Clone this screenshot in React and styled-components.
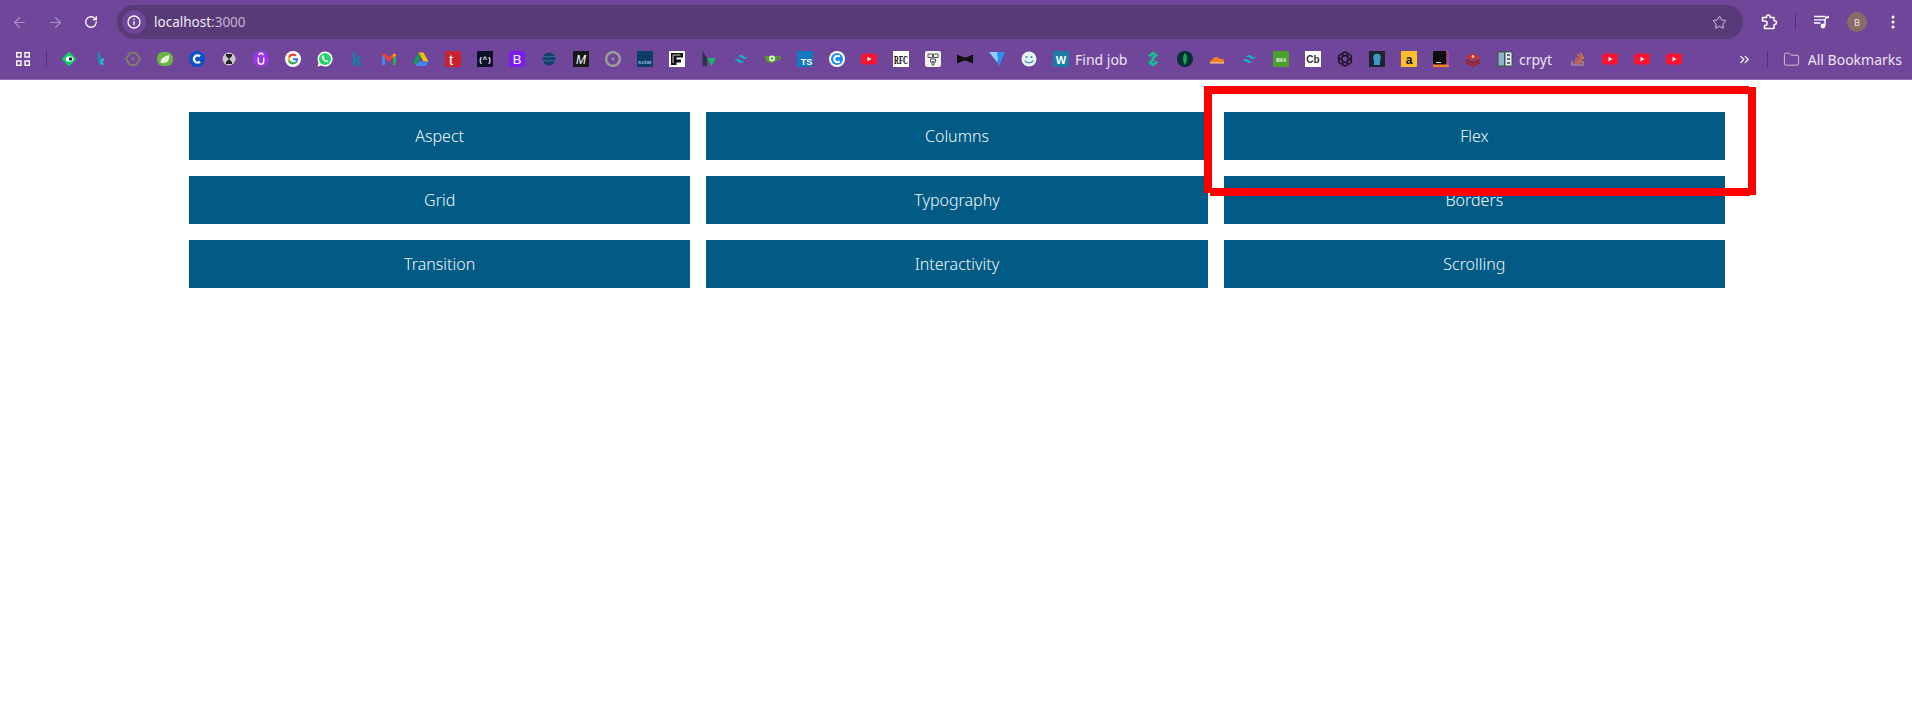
import React from 'react';
import styled, { createGlobalStyle } from 'styled-components';
import { ArrowLeft, ArrowRight, RotateCw, Star, ChevronsRight, Folder } from 'lucide-react';

const GlobalStyle = createGlobalStyle`
  html, body { margin: 0; padding: 0; background: #fff; }
  body { font-family: "Noto Sans", sans-serif; min-height: 714px; overflow: hidden; }
`;

const Page = styled.div`
  position: relative;
  width: 1912px;
  height: 714px;
`;

const Chrome = styled.header`
  height: 79px;
  background: #6f4699;
  border-bottom: 1px solid #8e6db0;
  font-family: "Noto Sans", sans-serif;
`;

const TopRow = styled.div`
  display: flex;
  align-items: flex-start;
  height: 42px;
  padding: 5px 0 0 1px;
  box-sizing: border-box;
`;

const NavButton = styled.div`
  width: 36px;
  height: 34px;
  display: flex;
  align-items: center;
  justify-content: center;
  color: ${p => (p.$dim ? '#a68fc0' : '#ffffff')};
`;

const Omnibox = styled.div`
  flex: 1;
  margin-left: 8px;
  height: 34px;
  border-radius: 17px;
  background: #583a78;
  display: flex;
  align-items: center;
  padding: 0 16px 0 5px;
`;

const InfoChip = styled.div`
  width: 24px;
  height: 24px;
  border-radius: 50%;
  background: #6f4699;
  display: flex;
  align-items: center;
  justify-content: center;
`;

const Url = styled.div`
  margin-left: 8px;
  font-size: 13.5px;
  color: #f1ebf6;
  flex: 1;
`;

const Port = styled.span`
  color: #c3b3d4;
`;

const Actions = styled.div`
  width: 169px;
  height: 34px;
  display: flex;
  align-items: center;
  padding-left: 18px;
  box-sizing: border-box;
`;

const Divider = styled.div`
  width: 1px;
  height: ${p => p.$h || 16}px;
  background: #4e3370;
  margin: ${p => p.$m || '0'};
`;

const Avatar = styled.div`
  width: 20px;
  height: 20px;
  border-radius: 50%;
  background: #8b6b68;
  color: #f0e6e2;
  font-size: 9px;
  display: flex;
  align-items: center;
  justify-content: center;
  margin: 0 24px 0 17px;
`;

const BookmarkRow = styled.div`
  display: flex;
  align-items: center;
  height: 34px;
`;

const AppsButton = styled.div`
  width: 46px;
  display: flex;
  justify-content: center;
`;

const Bookmark = styled.div`
  width: ${p => p.$w || 32}px;
  height: 24px;
  flex: none;
  display: flex;
  align-items: center;
  gap: 6px;
  padding-left: 8px;
  box-sizing: border-box;
`;

const BookmarkLabel = styled.span`
  font-size: 14px;
  color: #ece4f3;
  white-space: nowrap;
  margin-left: ${p => p.$ml || 0}px;
`;

const BookmarkEnd = styled.div`
  margin-left: auto;
  display: flex;
  align-items: center;
  padding-right: 10px;
`;

const Main = styled.main`
  display: grid;
  grid-template-columns: repeat(3, 1fr);
  gap: 16px;
  width: 1536px;
  padding: 32px 0 0 189px;
`;

const Tile = styled.div`
  height: 48px;
  background: #015b85;
  color: #f2f7fa;
  font-family: "Noto Sans", sans-serif;
  font-size: 16px;
  font-weight: 300;
  display: flex;
  align-items: center;
  justify-content: center;
`;

const Markup = styled.svg`
  position: absolute;
  left: 0;
  top: 0;
  pointer-events: none;
`;

const S = ({ children, size = 16, view = 16 }) => (
  <svg width={size} height={size} viewBox={`0 0 ${view} ${view}`} style={{ display: 'block', flex: 'none' }}>
    {children}
  </svg>
);

const T = ({ x = 8, y = 12, size = 10, fill = '#fff', weight = 700, family = 'Liberation Sans', italic, fit, children }) => (
  <text
    x={x}
    y={y}
    fontSize={size}
    fill={fill}
    fontWeight={weight}
    fontFamily={family}
    fontStyle={italic ? 'italic' : 'normal'}
    textAnchor="middle"
    textLength={fit}
    lengthAdjust={fit ? 'spacingAndGlyphs' : undefined}
  >
    {children}
  </text>
);

const YouTube = () => (
  <S>
    <rect y="2.5" width="16" height="11" rx="3" fill="#f8132f" />
    <path d="M6.5 5.8 10.5 8l-4 2.2z" fill="#fff" />
  </S>
);

const Tailwind = () => (
  <S view={24}>
    <path
      d="M12 6c-2.67 0-4.33 1.33-5 4 1-1.33 2.17-1.83 3.5-1.5.76.19 1.31.74 1.91 1.35.98 1 2.09 2.15 4.59 2.15 2.67 0 4.33-1.33 5-4-1 1.33-2.17 1.83-3.5 1.5-.76-.19-1.3-.74-1.91-1.35C15.61 7.15 14.5 6 12 6zm-5 6c-2.67 0-4.33 1.33-5 4 1-1.33 2.17-1.83 3.5-1.5.76.19 1.3.74 1.91 1.35C8.39 16.85 9.5 18 12 18c2.67 0 4.33-1.33 5-4-1 1.33-2.17 1.83-3.5 1.5-.76-.19-1.3-.74-1.91-1.35C10.61 13.15 9.5 12 7 12z"
      fill="#14b4cf"
    />
  </S>
);

const Google = () => (
  <S>
    <circle cx="8" cy="8" r="8" fill="#fff" />
    <g transform="translate(2.6 2.6) scale(.225)">
      <path d="M24 9.5c3.54 0 6.71 1.22 9.21 3.6l6.85-6.85C35.9 2.38 30.47 0 24 0 14.62 0 6.51 5.38 2.56 13.22l7.98 6.19C12.43 13.72 17.74 9.5 24 9.5z" fill="#ea4335" />
      <path d="M46.98 24.55c0-1.57-.15-3.09-.38-4.55H24v9.02h12.94c-.58 2.96-2.26 5.48-4.78 7.18l7.73 6c4.51-4.18 7.09-10.36 7.09-17.65z" fill="#4285f4" />
      <path d="M10.53 28.59c-.5-1.45-.76-2.99-.76-4.59s.27-3.14.76-4.59l-7.98-6.19C.92 16.46 0 20.12 0 24c0 3.88.92 7.54 2.56 10.78l7.97-6.19z" fill="#fbbc05" />
      <path d="M24 48c6.48 0 11.93-2.13 15.89-5.81l-7.73-6c-2.15 1.45-4.92 2.3-8.16 2.3-6.26 0-11.57-4.22-13.47-9.91l-7.98 6.19C6.51 42.62 14.62 48 24 48z" fill="#34a853" />
    </g>
  </S>
);

const favicons = [
  <S><path d="M8 1l7 7-7 7-7-7z" fill="#12c765" strokeLinejoin="round" stroke="#12c765" /><ellipse cx="8.5" cy="8" rx="3.8" ry="2.8" fill="#fff" /><circle cx="9.5" cy="8" r="1.7" fill="#123" /></S>,
  <S><path d="M5 1h2l1 7 3-1-1 4 1 3H7L5 10z" fill="#1b8eae" /><path d="M8 8l3-1-1 4 1 3-4-1z" fill="#2fb2d2" /></S>,
  <S><path d="M5 2h6l4 6-4 6H5L1 8z" fill="none" stroke="#7d7a72" strokeWidth="2.2" /><circle cx="8" cy="8" r="1.4" fill="#7d7a72" /></S>,
  <S><rect x="0" y="1" width="16" height="14" rx="6" fill="#6cb33f" /><path d="M3.5 12c0-5 4-7 9-8 0 5-2 8-6 8-1 0-2 0-3 0z" fill="#e5f3d9" /></S>,
  <S><circle cx="8" cy="8" r="8" fill="#0a52c7" /><path d="M11 5.4a3.6 3.6 0 1 0 0 5.2" fill="none" stroke="#fff" strokeWidth="2.4" /></S>,
  <S><circle cx="8" cy="8" r="6.5" fill="#c7c7c7" /><path d="M5 3h6v2L8 8l3 3v2H5v-2l3-3-3-3z" fill="#222" /></S>,
  <S><circle cx="8" cy="8" r="8" fill="#9c35e8" /><path d="M5.3 6.5v4a2.7 2.7 0 0 0 5.4 0v-4M6 4.2a2 2 0 0 1 4 0" fill="none" stroke="#fff" strokeWidth="1.4" /></S>,
  <Google />,
  <S><path d="M8 .5a7.5 7.5 0 0 0-6.5 11.2L.5 15.5l3.9-1A7.5 7.5 0 1 0 8 .5z" fill="#fff" /><circle cx="8" cy="8" r="6" fill="#25d366" /><path d="M5.6 4.6c-.8.7-1 1.8-.3 3.1.8 1.6 2 2.8 3.6 3.4 1.2.4 2.2 0 2.7-.9l-1.7-1.2-.9.7c-1-.4-1.7-1.2-2.1-2.1l.7-.8-1-2.2z" fill="#fff" /></S>,
  <S><path d="M4 1h2.4v8L10 5h3l-3.8 4L13 15h-2.8L7.6 10.7l-1.2 1.2V15H4z" fill="#0e83a8" /></S>,
  <S><path d="M1 3.5 1 14h3V7l4 3 4-3v7h3V3.5L12.5 2.6 8 6 3.5 2.6z" fill="#ea4335" /><path d="M1 14V4l3 2.5V14z" fill="#4285f4" /><path d="M15 14V4l-3 2.5V14z" fill="#34a853" /><path d="M12 6.5 15 4l-1.5-1.4L12 3.6z" fill="#fbbc05" /></S>,
  <S><path d="M5.5 1.5h5l5 9h-5z" fill="#fbbc04" /><path d="M5.5 1.5 .5 10.5 3 15l5-9z" fill="#0f9d58" /><path d="M3 15h10l2.5-4.5h-10z" fill="#4285f4" /></S>,
  <S><rect width="16" height="16" rx="1" fill="#c8232f" /><T x="6" y="14" size="15" weight="400">t</T></S>,
  <S><rect width="16" height="16" fill="#0e0f2c" /><T y="11" size="8" family="Liberation Mono" fit="13">{'(^)'}</T></S>,
  <S><rect width="16" height="16" rx="2.5" fill="#7a1cf0" /><T y="13" size="13" weight="400">B</T></S>,
  <S><circle cx="8" cy="8" r="6.5" fill="#143f6b" /><path d="M2 6c2-1.5 3 .5 6 0s4-1 6 0M2 10c2-1.5 3 .5 6 0s4-1 6 0" fill="none" stroke="#3f78a8" strokeWidth="1" /></S>,
  <S><rect width="16" height="16" fill="#181818" /><T y="12.5" size="12" weight="400" italic>M</T></S>,
  <S><circle cx="8" cy="8" r="6.8" fill="none" stroke="#9a9a9a" strokeWidth="2.6" /><circle cx="8" cy="8" r="1.4" fill="#9a9a9a" /></S>,
  <S><rect width="16" height="16" fill="#0d3d66" /><T y="13" size="6" weight="400" fill="#9fd3ee" fit="14">solar</T></S>,
  <S><rect width="16" height="16" fill="#fff" /><path d="M2 2h12v4.500H7.500v2H12v3H7.500V14H2z" fill="#111" /><path d="M4 4h7.500M4 4v8" stroke="#fff" strokeWidth=".8" fill="none" /></S>,
  <S><path d="M1.500 0 6 7V15H1.500z" fill="#27364a" /><path d="M6 7h9l-4.500 8z" fill="#18b56b" /></S>,
  <Tailwind />,
  <S><path d="M0 5h12c0 4-2 7-6 7S0 9 0 5z" fill="#5a9a2c" /><path d="M12 6h3.500c0 2-2 3-4.500 3" fill="none" stroke="#5a9a2c" strokeWidth="1.400" /><circle cx="7" cy="7.500" r="3" fill="#e4f0d4" /><circle cx="7" cy="7.500" r="1.200" fill="#5a9a2c" /></S>,
  <S><rect width="16" height="16" fill="#1478bf" /><T x="9.500" y="14" size="9">TS</T></S>,
  <S><circle cx="8" cy="8" r="8" fill="#fff" /><circle cx="8" cy="8" r="6" fill="#1a8cf5" /><path d="M10.700 5.700a3.200 3.200 0 1 0 0 4.600" fill="none" stroke="#fff" strokeWidth="2.200" /></S>,
  <YouTube />,
  <S><rect width="16" height="16" fill="#fff" /><T y="13" size="13" fill="#000" family="Liberation Serif" fit="14">RFC</T></S>,
  <S><rect width="16" height="16" rx="2" fill="#f3f3f3" /><path d="M3 3h4.500v3.500H3zM8.500 3H13v3.500H8.500zM5.500 8h5v3h-5zM7 11h2v3H7z" fill="none" stroke="#555" strokeWidth="1" /></S>,
  <S><path d="M0 3.500l7 3h2l7-3v9l-7-3H7l-7 3z" fill="#101010" /><circle cx="8" cy="8" r="1.800" fill="#101010" /></S>,
  <S><path d="M0 1h16L10 15 8 11z" fill="#2a8ff5" /><path d="M0 1h8l1 6-1 4z" fill="#8ecbff" /></S>,
  <S><circle cx="8" cy="8" r="7.500" fill="#e6f4f4" /><circle cx="5.500" cy="6" r="1.100" fill="#3f8aa0" /><circle cx="10.500" cy="6" r="1.100" fill="#3f8aa0" /><path d="M4 9.500c1 3 7 3 8 0" stroke="#3f8aa0" fill="none" strokeWidth="1.200" /></S>,
  null,
  <S><path d="M8 0.500l5 4-5 4-2-1.600L9 4.500 8 3.800 5 6.200 3 4.500zM8 15.500l-5-4 5-4 2 1.600L7 11.500l1 .7 3-2.400 2 1.700z" fill="#10c397" /></S>,
  <S><circle cx="8" cy="8" r="8" fill="#052e36" /><path d="M8 2c2.500 2.500 2.500 8 0 12-2.500-4-2.500-9.500 0-12z" fill="#13aa52" /></S>,
  <S><path d="M1 12a2.500 2.500 0 0 1 2-3 4.500 4.500 0 0 1 8-1 3 3 0 0 1 4 4z" fill="#f38020" /><path d="M1 12h14" stroke="#fbd4a8" strokeWidth="1" /></S>,
  <Tailwind />,
  <S><rect width="16" height="16" rx="1" fill="#49a02c" /><T y="10.500" size="6" fill="#e9f5e2" family="Liberation Serif">B64</T></S>,
  <S><rect width="16" height="16" fill="#fff" /><T y="12" size="10" fill="#333">Cb</T></S>,
  <S><g fill="none" stroke="#120d1b" strokeWidth="1"><circle cx="8" cy="8" r="6.800" /><ellipse cx="8" cy="8" rx="7" ry="3" transform="rotate(30 8 8)" /><ellipse cx="8" cy="8" rx="7" ry="3" transform="rotate(90 8 8)" /><ellipse cx="8" cy="8" rx="7" ry="3" transform="rotate(150 8 8)" /></g></S>,
  <S><rect width="16" height="16" fill="#1f2430" /><circle cx="8" cy="6.500" r="3.800" fill="#3f97c7" /><rect x="5" y="9" width="6" height="5" fill="#3f97c7" /></S>,
  <S><rect width="16" height="16" fill="#fbbf2d" /><T y="13" size="12" fill="#111">a</T></S>,
  <S><rect width="16" height="16" rx="1" fill="#f2822a" /><rect width="13.500" height="13.500" rx="1" fill="#0c0c0c" /><path d="M14 0h2v14h-2z" fill="#a040c0" /><path d="M3 11h5v1H3z" fill="#ddd" /></S>,
  <S><path d="M8 3l7 3-7 3-7-3z" fill="#d82c20" /><path d="M1 8l7 3 7-3v2l-7 3-7-3zM1 11l7 3 7-3v1.500L8 15.500 1 12.500z" fill="#a41e11" /><circle cx="8" cy="5.500" r="1.200" fill="#fff" /></S>,
  null,
  <S><path d="M2 10v4h11v-4" fill="none" stroke="#b3a6a0" strokeWidth="1.200" /><path d="M4 12h7M4.500 9.500l7 1.200M5.500 6.500l6.500 3M7.500 3.500l5.500 4.500M10 1.500l4 6" stroke="#f48024" strokeWidth="1.200" fill="none" /></S>,
  <YouTube />,
  <YouTube />,
  <YouTube />,
];

const Crypt = () => (
  <S>
    <rect width="16" height="16" rx="1.500" fill="#41555f" />
    <rect x="1.500" y="1.500" width="5.500" height="13" fill="#8fb2c4" />
    <rect x="8.500" y="1.500" width="6" height="13" fill="#e5ecef" />
    <path d="M10 4h3M10 8h3M10 12h3" stroke="#33444c" strokeWidth="1.500" />
  </S>
);

const Wix = () => (
  <S>
    <rect width="16" height="16" fill="#1a7ba3" />
    <T y="12.500" size="11">W</T>
  </S>
);

const PuzzleIcon = () => (
  <svg width="17" height="16" viewBox="0 0 17 16" style={{ display: 'block' }}>
    <path
      d="M1.500 3.500H5.500V2.800a1.800 1.800 0 0 1 3.600 0V3.500H13V6.800h.700a1.800 1.800 0 0 1 0 3.600H13V14.500H3.500V11.500h.3a2.300 2.300 0 0 0 0-4.600H1.500z"
      fill="none"
      stroke="#fff"
      strokeWidth="1.500"
      strokeLinejoin="round"
    />
  </svg>
);

const MediaIcon = () => (
  <svg width="16" height="14" viewBox="0 0 16 14" style={{ display: 'block' }}>
    <path d="M0 1.500h11M0 4.800h11M0 8h6.500" stroke="#fff" strokeWidth="1.300" />
    <path d="M11 4V10.500" stroke="#fff" strokeWidth="1.500" />
    <path d="M11 1.800 15 .8V3l-4 1z" fill="#fff" />
    <circle cx="9" cy="11" r="2.400" fill="#fff" />
  </svg>
);

const DotsIcon = () => (
  <svg width="4" height="14" viewBox="0 0 4 14" style={{ display: 'block' }}>
    <circle cx="2" cy="2" r="1.500" fill="#fff" />
    <circle cx="2" cy="7" r="1.500" fill="#fff" />
    <circle cx="2" cy="12" r="1.500" fill="#fff" />
  </svg>
);

const InfoIcon = () => (
  <svg width="14" height="14" viewBox="0 0 14 14" style={{ display: 'block' }}>
    <circle cx="7" cy="7" r="6" fill="none" stroke="#fff" strokeWidth="1.300" />
    <path d="M7 6.200v4M7 3.800v1.300" stroke="#fff" strokeWidth="1.300" />
  </svg>
);

const AppsIcon = () => (
  <svg width="14" height="14" viewBox="0 0 14 14" style={{ display: 'block' }}>
    <g fill="none" stroke="#fff" strokeWidth="1.400">
      <rect x=".7" y=".7" width="4.300" height="4.300" />
      <rect x="9" y=".7" width="4.300" height="4.300" />
      <rect x=".7" y="9" width="4.300" height="4.300" />
      <rect x="9" y="9" width="4.300" height="4.300" />
    </g>
  </svg>
);

const tiles = ['Aspect', 'Columns', 'Flex', 'Grid', 'Typography', 'Borders', 'Transition', 'Interactivity', 'Scrolling'];

function App() {
  return (
    <Page>
      <GlobalStyle />
      <Chrome>
        <TopRow>
          <NavButton $dim><ArrowLeft size={17} strokeWidth={1.7} /></NavButton>
          <NavButton $dim><ArrowRight size={17} strokeWidth={1.7} /></NavButton>
          <NavButton><RotateCw size={14} strokeWidth={2.2} /></NavButton>
          <Omnibox>
            <InfoChip><InfoIcon /></InfoChip>
            <Url>localhost<Port>:3000</Port></Url>
            <Star size={15} color="#d8cfe2" strokeWidth={1.5} />
          </Omnibox>
          <Actions>
            <PuzzleIcon />
            <Divider $m="0 18px 0 17px" />
            <MediaIcon />
            <Avatar>B</Avatar>
            <DotsIcon />
          </Actions>
        </TopRow>
        <BookmarkRow>
          <AppsButton><AppsIcon /></AppsButton>
          <Divider $m="0 6px 0 0" />
          {favicons.map((icon, i) => {
            if (i === 31) return <Bookmark key={i} $w={92}><Wix /><BookmarkLabel>Find job</BookmarkLabel></Bookmark>;
            if (i === 43) return <Bookmark key={i} $w={73}><Crypt /><BookmarkLabel>crpyt</BookmarkLabel></Bookmark>;
            return <Bookmark key={i}>{icon}</Bookmark>;
          })}
          <BookmarkEnd>
            <ChevronsRight size={15} color="#fff" strokeWidth={1.8} />
            <Divider $m="0 15px" />
            <Folder size={17} color="#cdbfdc" strokeWidth={1.4} />
            <BookmarkLabel $ml={8}>All Bookmarks</BookmarkLabel>
          </BookmarkEnd>
        </BookmarkRow>
      </Chrome>
      <Main>
        {tiles.map(t => <Tile key={t}>{t}</Tile>)}
      </Main>
      <Markup width="1912" height="714">
        <g fill="#ff0000">
          <rect x="1204" y="86" width="545" height="8" />
          <rect x="1204" y="86" width="8" height="107" />
          <rect x="1210" y="188" width="540" height="8" />
          <rect x="1748" y="87" width="8" height="108" />
        </g>
      </Markup>
    </Page>
  );
}

export default App;
